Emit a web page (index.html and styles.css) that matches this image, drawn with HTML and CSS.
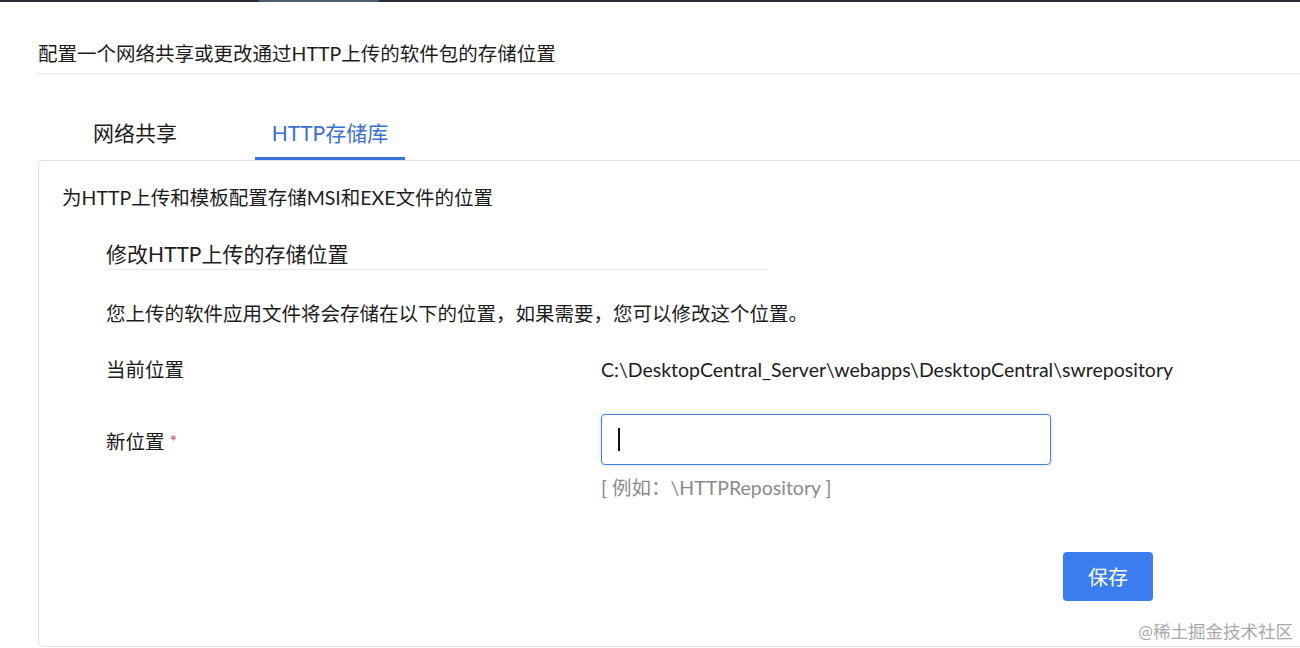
FILE: index.html
```html
<!DOCTYPE html>
<html lang="zh-CN">
<head>
<meta charset="utf-8">
<title>HTTP存储库</title>
<link rel="stylesheet" href="styles.css">
</head>
<body>
<div class="topbar"><span class="topbar-seg"></span></div>
<main class="page">
  <h1 class="page-title">配置一个网络共享或更改通过HTTP上传的软件包的存储位置</h1>
  <nav class="tabs">
    <div class="tab">网络共享</div>
    <div class="tab tab-active">HTTP存储库</div>
  </nav>
  <section class="panel">
    <p class="intro">为HTTP上传和模板配置存储MSI和EXE文件的位置</p>
    <div class="section">
      <h2 class="section-title">修改HTTP上传的存储位置</h2>
      <p class="desc">您上传的软件应用文件将会存储在以下的位置，如果需要，您可以修改这个位置。</p>
      <div class="row">
        <div class="label">当前位置</div>
        <div class="value">C:\DesktopCentral_Server\webapps\DesktopCentral\swrepository</div>
      </div>
      <div class="row row-input">
        <div class="label label-pad">新位置<span class="req">*</span></div>
        <div class="field">
          <div class="input"><span class="caret"></span></div>
          <div class="hint">[ 例如：\HTTPRepository ]</div>
        </div>
      </div>
      <div class="actions">
        <button class="btn" type="button">保存</button>
      </div>
    </div>
  </section>
</main>
<div class="watermark">@稀土掘金技术社区</div>
</body>
</html>
```
FILE: styles.css
```css
html, body {
  margin: 0;
  padding: 0;
}
body {
  width: 1300px;
  height: 648px;
  overflow: hidden;
  background: #ffffff;
  color: #1c1c1c;
  font-family: "Lato", "Noto Sans CJK SC", sans-serif;
  font-size: 19.5px;
  position: relative;
}
.topbar {
  height: 2px;
  background: #2c2d39;
  display: flex;
}
.topbar-seg {
  margin-left: 259px;
  width: 120px;
  background: #4d5e70;
}
.page {
  padding-left: 38px;
}
.page-title {
  margin: 38px 0 0 0;
  font-size: 19.5px;
  font-weight: normal;
  line-height: 28px;
  padding-bottom: 5px;
  border-bottom: 1px solid #e6e6e6;
}
.tabs {
  display: flex;
  gap: 45px;
  padding-left: 22px;
  margin-top: 30px;
}
.tab {
  width: 150px;
  text-align: center;
  font-size: 21px;
  line-height: 30px;
  padding: 14px 0 9px;
  border-bottom: 3px solid transparent;
  color: #1c1c1c;
}
.tab-active {
  color: #3a70d6;
  border-bottom-color: #3a73dc;
}
.panel {
  margin-right: -20px;
  border: 1px solid #e2e2e2;
  border-radius: 4px;
  padding: 23px 0 45px 23px;
}
.intro {
  margin: 0;
  line-height: 28px;
}
.section {
  padding-left: 44px;
}
.section-title {
  margin: 27px 0 0 0;
  width: 662px;
  font-size: 21px;
  font-weight: normal;
  line-height: 30px;
  border-bottom: 1px solid #e8e8e8;
}
.desc {
  margin: 30px 0 0 0;
  line-height: 28px;
}
.row {
  display: grid;
  grid-template-columns: 495px 1fr;
  margin-top: 28px;
  line-height: 28px;
}
.row-input {
  margin-top: 30px;
}
.label-pad {
  padding-top: 14px;
}
.req {
  color: #e0474c;
  font-size: 18px;
  margin-left: 5px;
  position: relative;
  top: -1px;
}
.input {
  height: 49px;
  border: 1px solid #4a80dc;
  border-radius: 4px;
  box-shadow: 0 0 3px rgba(74, 128, 220, 0.35);
  display: flex;
  align-items: center;
  padding-left: 16px;
  box-sizing: content-box;
  width: 432px;
}
.caret {
  width: 2px;
  height: 23px;
  background: #111;
}
.hint {
  margin-top: 9px;
  color: #8a8a8a;
  line-height: 28px;
}
.actions {
  margin-top: 50px;
  padding-left: 957px;
}
.btn {
  width: 90px;
  height: 49px;
  border: none;
  border-radius: 4px;
  background: #3b7cef;
  color: #ffffff;
  font-family: "Lato", "Noto Sans CJK SC", sans-serif;
  font-size: 20px;
  padding: 0;
}
.watermark {
  position: absolute;
  right: 7px;
  top: 619px;
  font-size: 17.5px;
  line-height: 26px;
  color: #a9a9a9;
}
```
